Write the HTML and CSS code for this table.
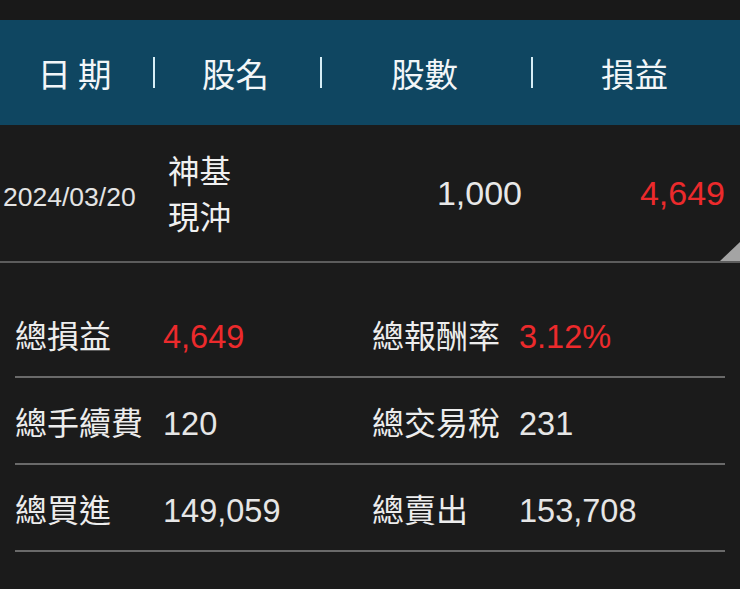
FILE: index.html
```html
<!DOCTYPE html>
<html lang="zh-Hant">
<head>
<meta charset="utf-8">
<link rel="stylesheet" href="styles.css">
</head>
<body>
<div class="page">
  <div class="topbar"></div>
  <div class="header">
    <div class="hcell first"><span class="hlabel spaced">日期</span></div>
    <div class="hcell"><span class="hlabel">股名</span></div>
    <div class="hcell"><span class="hlabel">股數</span></div>
    <div class="hcell"><span class="hlabel">損益</span></div>
  </div>
  <div class="trade">
    <div class="date num">2024/03/20</div>
    <div class="name"><div>神基</div><div>現沖</div></div>
    <div class="qty num">1,000</div>
    <div class="pl num red">4,649</div>
    <span class="corner"></span>
  </div>
  <div class="summary">
    <div class="srow">
      <div class="slabel">總損益</div>
      <div class="sval num red">4,649</div>
      <div class="slabel">總報酬率</div>
      <div class="sval num red">3.12%</div>
    </div>
    <div class="srow">
      <div class="slabel">總手續費</div>
      <div class="sval num">120</div>
      <div class="slabel">總交易稅</div>
      <div class="sval num">231</div>
    </div>
    <div class="srow">
      <div class="slabel">總買進</div>
      <div class="sval num">149,059</div>
      <div class="slabel">總賣出</div>
      <div class="sval num">153,708</div>
    </div>
  </div>
</div>
</body>
</html>
```

FILE: styles.css
```css
html, body {
  margin: 0;
  padding: 0;
  background: #1b1b1b;
}
body {
  font-family: "Noto Sans CJK TC", "Noto Sans", sans-serif;
  color: #ececec;
}
.page {
  width: 740px;
  height: 589px;
  overflow: hidden;
}
.topbar {
  height: 20px;
  background: #191919;
}
.header {
  height: 105px;
  background: #0f4661;
  display: grid;
  grid-template-columns: 153px 167px 211px 1fr;
  align-items: center;
}
.hcell {
  height: 31px;
  border-left: 2px solid #d6eef6;
  display: flex;
  align-items: center;
  justify-content: center;
  padding-right: 4px;
}
.hcell.first {
  border-left: none;
}
.hlabel {
  font-size: 33.5px;
  line-height: 31px;
  color: #f2f6f8;
  font-weight: 400;
}
.hlabel.spaced {
  letter-spacing: 7px;
  margin-right: -7px;
}
.num {
  font-family: "Liberation Sans", Arial, sans-serif;
}
.red {
  color: #ec2a2c;
}
.trade {
  position: relative;
  height: 136px;
  border-bottom: 2px solid #5c5c5c;
  display: grid;
  grid-template-columns: 165px 140px 214px 1fr;
  align-items: center;
  padding: 0 15px 0 3px;
}
.date {
  font-size: 26.5px;
  color: #e4e4e4;
  padding-top: 8px;
}
.name {
  font-size: 31.5px;
  line-height: 46px;
  color: #f0f0f0;
  padding-bottom: 2px;
}
.qty {
  font-size: 34px;
  text-align: right;
  color: #e8e8e8;
}
.pl {
  font-size: 34px;
  text-align: right;
}
.corner {
  position: absolute;
  right: 0;
  bottom: 0;
  width: 0;
  height: 0;
  border-left: 20px solid transparent;
  border-bottom: 19px solid #a4a4a4;
}
.summary {
  padding: 28px 15px 0 15px;
}
.srow {
  height: 85px;
  border-bottom: 2px solid #6a6a6a;
  display: grid;
  grid-template-columns: 148px 209px 147px 1fr;
  align-items: center;
}
.slabel {
  font-size: 32px;
  color: #ededed;
}
.sval {
  font-size: 32.5px;
  color: #e6e6e6;
  padding-top: 7px;
}
.sval.red {
  color: #ec2a2c;
}
```
